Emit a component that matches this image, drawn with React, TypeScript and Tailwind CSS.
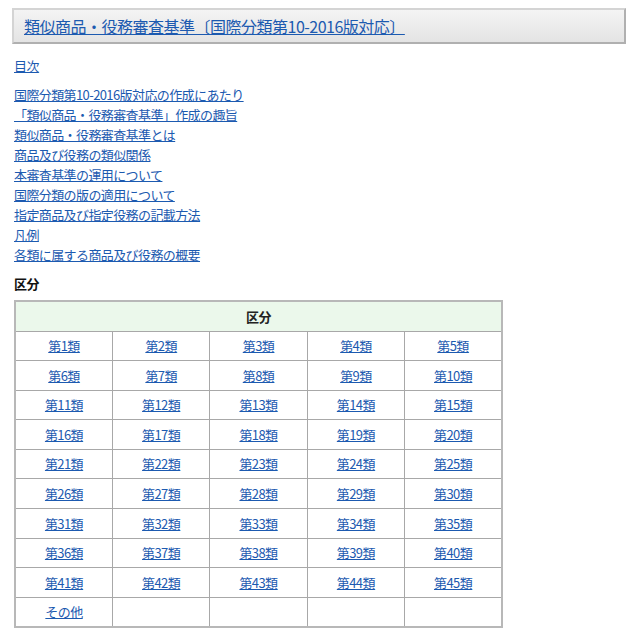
const LINKS = [
  "国際分類第10-2016版対応の作成にあたり",
  "「類似商品・役務審査基準」作成の趣旨",
  "類似商品・役務審査基準とは",
  "商品及び役務の類似関係",
  "本審査基準の運用について",
  "国際分類の版の適用について",
  "指定商品及び指定役務の記載方法",
  "凡例",
  "各類に属する商品及び役務の概要",
];

const CLASSES = [
  ...Array.from({ length: 45 }, (_, i) => `第${i + 1}類`),
  "その他",
  "",
  "",
  "",
  "",
];

const rows: string[][] = [];
for (let i = 0; i < CLASSES.length; i += 5) rows.push(CLASSES.slice(i, i + 5));

export default function App() {
  return (
    <div
      className="min-h-[640px] bg-white px-[14px] pt-[8px] text-[13px] text-[#222] tracking-[-0.6px]"
      style={{ fontFamily: '"Noto Sans CJK JP", "Liberation Sans", sans-serif' }}
    >
      <div className="-ml-[2px] w-[614px] h-[36px] border-2 border-t-[#d4d4d4] border-l-[#d4d4d4] border-b-[#b0b0b0] border-r-[#b0b0b0] bg-gradient-to-b from-[#f4f4f4] to-[#e4e4e4] flex items-center px-[10px]">
        <a href="#" className="text-[16px] text-[#1c5ab0] underline leading-none tracking-[-0.5px]">
          類似商品・役務審査基準〔国際分類第10-2016版対応〕
        </a>
      </div>

      <div className="mt-[12px] leading-[20px]">
        <a href="#" className="text-[#1c5ab0] underline">目次</a>
      </div>

      <ul className="mt-[9px] leading-[20px]">
        {LINKS.map((l) => (
          <li key={l}>
            <a href="#" className="text-[#1c5ab0] underline">{l}</a>
          </li>
        ))}
      </ul>

      <div className="mt-[9px] font-bold leading-[20px] text-[#111]">区分</div>

      <table className="mt-[6px] w-[489px] border-collapse border-2 border-[#b8b8b8] table-fixed">
        <thead>
          <tr>
            <th colSpan={5} className="h-[30px] border border-[#a8a8a8] bg-[#ebf8eb] font-bold text-[13px]">
              区分
            </th>
          </tr>
        </thead>
        <tbody>
          {rows.map((r, i) => (
            <tr key={i}>
              {r.map((c, j) => (
                <td key={j} className="h-[29.6px] border border-[#a8a8a8] text-center p-0">
                  {c && (
                    <a href="#" className="text-[#1c5ab0] underline">{c}</a>
                  )}
                </td>
              ))}
            </tr>
          ))}
        </tbody>
      </table>
    </div>
  );
}
